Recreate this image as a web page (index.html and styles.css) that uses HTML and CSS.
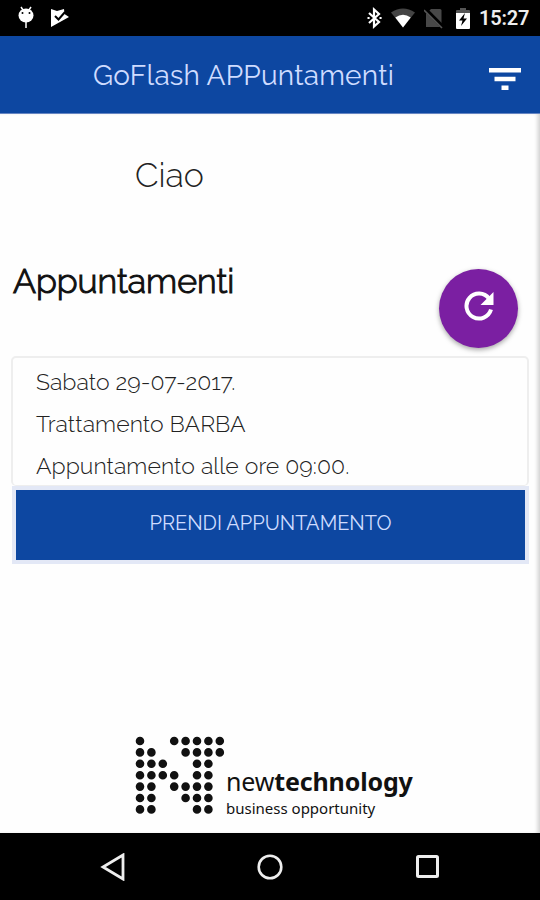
FILE: index.html
```html
<!DOCTYPE html>
<html lang="it">
  <head>
    <meta charset="UTF-8" />
    <meta name="viewport" content="width=device-width, initial-scale=1.0" />
    <title>GoFlash APPuntamenti</title>
    <link rel="stylesheet" href="styles.css">
  </head>
  <body>
    <div class="status-bar">
      <svg class="icon-debug" width="18" height="24" viewBox="0 0 18 24">
        <path d="M4 1l2 3M14 1l-2 3M9 15v7" stroke="#fff" stroke-width="1.5" />
        <ellipse cx="9" cy="9.5" rx="7.5" ry="7" fill="#fff" />
        <circle cx="5.5" cy="7" r="1" /><circle cx="12.5" cy="7" r="1" />
      </svg>
      <svg class="icon-store" width="20" height="20" viewBox="0 0 20 20">
        <path d="M1 1l6 2 7-2 .5 5L19 9 1 19z" fill="#fff" />
        <path d="M5 8l3.5 3.5L15 4" fill="none" stroke="#000" stroke-width="2" />
      </svg>
      <div class="status-right">
        <svg width="16" height="22" viewBox="0 0 16 22">
          <path d="M2 6l10 9-5 4.5v-17L12 7 2 16" fill="none" stroke="#fff" stroke-width="2.2" />
          <path d="M1.500 11h.1M13.500 11h.1" stroke="#fff" stroke-width="2" stroke-linecap="square" />
        </svg>
        <svg class="icon-wifi" width="24" height="20" viewBox="0 0 24 20">
          <path d="M0 4.500Q12-3.500 24 4.500L12 19.500z" fill="#444" />
          <path d="M4.300 9.500Q12 4 19.700 9.500L12 19.500z" fill="#fff" />
        </svg>
        <svg class="icon-sim" width="20" height="22" viewBox="0 0 20 22">
          <path d="M7 2h9q1.500 0 1.500 1.500V20H2V7z" fill="#484848" />
          <path d="M1 2l18 18" stroke="#000" stroke-width="4" />
          <path d="M0 3l18 18" stroke="#555" stroke-width="1.600" />
        </svg>
        <svg class="icon-battery" width="14" height="21" viewBox="0 0 14 21">
          <path d="M0 3q0-1 1-1h3V0h6v2h3q1 0 1 1v4H0z" fill="#555" />
          <path d="M0 5h14v15q0 1-1 1H1q-1 0-1-1z" fill="#fff" />
          <path d="M9 5l-6 7.500h3.500L5 18l6-7.500H7.500z" />
        </svg>
        <span class="clock">15:27</span>
      </div>
    </div>

    <header class="app-bar">
      <h1>GoFlash APPuntamenti</h1>
      <svg width="32" height="22" viewBox="0 0 32 22">
        <path d="M0 0h32v4.500H0zM5.500 8.700h21v4.500h-21zM12.500 17.500h7V22h-7z" fill="#fff" />
      </svg>
    </header>

    <main>
      <p class="greeting">Ciao</p>
      <div class="section-head">
        <h2>Appuntamenti</h2>
        <button class="refresh" aria-label="Aggiorna">
          <svg width="30" height="30" viewBox="0 0 30 30">
            <path d="M25 7.500A12.500 12.500 0 1 0 27 18.500" fill="none" stroke="#fff" stroke-width="4" />
            <path d="M29.500 1v13H16.500z" fill="#fff" />
          </svg>
        </button>
      </div>
      <div class="card">
        <p class="day">Sabato 29-07-2017.</p>
        <p class="service">Trattamento BARBA</p>
        <p class="time">Appuntamento alle ore 09:00.</p>
      </div>
      <button class="book"><span>PRENDI APPUNTAMENTO</span></button>

      <footer class="brand">
        <svg width="90" height="79" viewBox="0 0 90 79">
          <g fill="none" stroke="#111" stroke-width="8.600" stroke-linecap="round">
            <path d="M5 5h0M39.200 5h0M50.600 5h0M62 5h0M73.400 5h0M84.800 5h0" />
            <path d="M5 16.400h0M16.400 16.400h0M50.600 16.400h0M62 16.400h0M73.400 16.400h0M84.800 16.400h0" />
            <path d="M5 27.800h0M16.400 27.800h0M27.800 27.800h0M62 27.800h0M73.400 27.800h0" />
            <path d="M5 39.200h0M16.400 39.200h0M27.800 39.200h0M39.200 39.200h0M62 39.200h0M73.400 39.200h0" />
            <path d="M5 50.600h0M16.400 50.600h0M39.200 50.600h0M50.600 50.600h0M62 50.600h0M73.400 50.600h0" />
            <path d="M5 62h0M16.400 62h0M50.600 62h0M62 62h0M73.400 62h0" />
            <path d="M5 73.400h0M16.400 73.400h0M62 73.400h0M73.400 73.400h0" />
          </g>
        </svg>
        <div class="brand-text">
          <div class="brand-name">new<b>technology</b></div>
          <div class="tagline">business opportunity</div>
        </div>
      </footer>
    </main>

    <nav class="nav-bar">
      <svg width="26" height="28" viewBox="0 0 26 28">
        <path d="M23 2v24L3 14z" fill="none" stroke="#eee" stroke-width="2.800" />
      </svg>
      <svg width="26" height="28" viewBox="0 0 26 28">
        <circle cx="13" cy="14" r="11.300" fill="none" stroke="#eee" stroke-width="2.600" />
      </svg>
      <svg width="26" height="28" viewBox="0 0 26 28">
        <rect x="3.500" y="3.500" width="20" height="20" rx="1" fill="none" stroke="#eee" stroke-width="3" />
      </svg>
    </nav>
  </body>
</html>
```

FILE: styles.css
```css
* {
  box-sizing: border-box;
}
body {
  margin: 0;
  height: 900px;
  display: flex;
  flex-direction: column;
  font-family: Raleway, Lato, sans-serif;
  background-color: #fefefe;
  overflow: hidden;
}
h1,
h2,
p {
  margin: 0;
  white-space: nowrap;
}
button {
  border: none;
  padding: 0;
  font-family: inherit;
}
svg {
  display: block;
  flex: none;
}

.status-bar {
  display: flex;
  align-items: center;
  height: 36px;
  padding: 0 11px 0 17px;
  background-color: #000;
}
.icon-store {
  margin-left: 15px;
}
.status-right {
  display: flex;
  align-items: center;
  margin-left: auto;
}
.icon-wifi {
  margin-left: 8px;
}
.icon-sim {
  margin-left: 9px;
}
.icon-battery {
  margin-left: 12px;
}
.clock {
  width: 50px;
  margin-left: 9px;
  font: 600 20px/38px Roboto, sans-serif;
  letter-spacing: -0.2px;
  color: #eee;
}

.app-bar {
  display: flex;
  align-items: center;
  justify-content: space-between;
  height: 78px;
  padding: 0 19px 0 93px;
  background-color: #0d47a1;
  border-bottom: 1px solid #6685c2;
}
.app-bar h1 {
  padding-top: 2px;
  font-size: 28px;
  font-weight: 400;
  line-height: 76px;
  letter-spacing: 0.2px;
  color: #cfdcff;
}
.app-bar svg {
  margin-top: 8px;
}

main {
  flex: 1;
  display: flex;
  flex-direction: column;
  padding: 35px 11px 0 12px;
  box-shadow: inset -4px 0 4px -2px #ccc;
}
.greeting {
  padding-left: 123px;
  font-size: 34px;
  font-weight: 300;
  line-height: 52px;
  color: #222;
}
.section-head {
  display: flex;
  justify-content: space-between;
  height: 155px;
  padding-right: 11px;
}
.section-head h2 {
  padding: 54px 0 0 1px;
  font-size: 34px;
  font-weight: 300;
  line-height: 52px;
  color: #111;
  -webkit-text-stroke: 1.1px #111;
}
.refresh {
  display: flex;
  align-items: center;
  justify-content: center;
  width: 79px;
  height: 79px;
  margin-top: 68px;
  padding-bottom: 6px;
  border-radius: 50%;
  background-color: #7b1fa2;
  box-shadow: 0 2px 5px rgba(0, 0, 0, 0.35);
}
.card {
  height: 130px;
  padding: 3px 0 0 23px;
  margin-left: -1px;
  border: 2px solid #eee;
  border-bottom-width: 1px;
  border-radius: 5px;
}
.card p {
  font-size: 23px;
  font-weight: 300;
  line-height: 42px;
  letter-spacing: 0.05px;
  color: #222;
}
.book {
  height: 78px;
  padding-bottom: 4px;
  border: 4px solid #e3e8f6;
  font-size: 20px;
  background-color: #0d47a1;
  color: #cfdcff;
}

.brand {
  display: flex;
  margin: 172px 0 0 123px;
}
.brand-text {
  padding: 28px 0 0 1px;
  font-family: "Noto Sans", sans-serif;
  white-space: nowrap;
  color: #111;
}
.brand-name {
  font-size: 25px;
  line-height: 34px;
  letter-spacing: -0.15px;
}
.tagline {
  font-size: 15px;
  line-height: 20px;
}

.nav-bar {
  display: flex;
  align-items: center;
  justify-content: space-between;
  height: 67px;
  padding: 0 100px;
  background-color: #000;
}
```
